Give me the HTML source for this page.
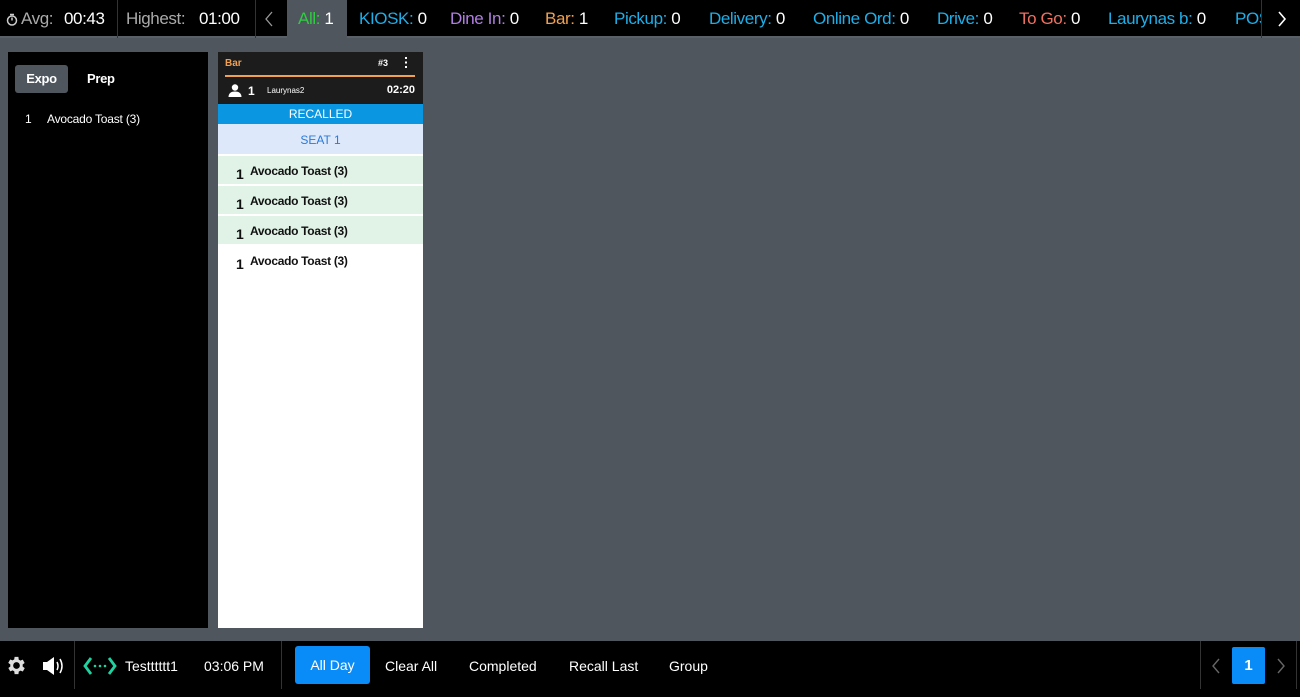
<!DOCTYPE html>
<html><head><style>
*{margin:0;padding:0;box-sizing:border-box}
body{width:1300px;height:697px;background:#4f565e;font-family:"Liberation Sans",sans-serif;position:relative;overflow:hidden}
.top{position:absolute;left:0;top:0;width:1300px;height:38px;background:#000;border-bottom:2px solid #5a6068}
.t{position:absolute;top:9px;font-size:17px;color:#fff;white-space:nowrap;letter-spacing:-0.4px}
.g{color:#aaa}
.vd{position:absolute;top:0;width:1px;height:38px;background:#333}
.left{position:absolute;left:8px;top:52px;width:200px;height:576px;background:#000}
.card{position:absolute;left:218px;top:52px;width:205px;height:576px;background:#fff}
.row{height:30px;border-bottom:2px solid #fff;font-size:12px;font-weight:bold;color:#111;position:relative;letter-spacing:-0.3px}
.row b{position:absolute;left:18px;top:10px;font-size:14px}
.row span{position:absolute;left:32px;top:8px}
.bot{position:absolute;left:0;top:641px;width:1300px;height:56px;background:#000}
.bt{position:absolute;top:17px;color:#fff;font-size:14px}
</style></head><body>
<div class="top">
<svg style="position:absolute;left:6px;top:13px" width="12" height="13" viewBox="0 0 12 13"><circle cx="6" cy="7.5" r="4.5" fill="none" stroke="#ccc" stroke-width="1.5"/><path d="M4 1.5h4M6 7.5V4.5" stroke="#ccc" stroke-width="1.5"/></svg>
<div class="t g" style="left:21px">Avg:</div><div class="t" style="left:64px">00:43</div>
<div class="vd" style="left:117px"></div>
<div class="t g" style="left:126px">Highest:</div><div class="t" style="left:199px">01:00</div>
<div class="vd" style="left:255px"></div>
<svg style="position:absolute;left:264px;top:11px" width="10" height="16" viewBox="0 0 10 16"><path d="M8 1L2 8l6 7" stroke="#999" stroke-width="1.3" fill="none"/></svg>
<div style="position:absolute;left:287px;top:0;width:60px;height:38px;background:#4f565e"></div>
<div class="t" style="left:298px"><span style="color:#2ecc40">All:</span> 1</div>
<div class="t" style="left:359px"><span style="color:#1eaee8">KIOSK:</span> 0</div>
<div class="t" style="left:450px"><span style="color:#b07ee0">Dine In:</span> 0</div>
<div class="t" style="left:545px"><span style="color:#f0a050">Bar:</span> 1</div>
<div class="t" style="left:614px"><span style="color:#1eaee8">Pickup:</span> 0</div>
<div class="t" style="left:709px"><span style="color:#1eaee8">Delivery:</span> 0</div>
<div class="t" style="left:813px"><span style="color:#1eaee8">Online Ord:</span> 0</div>
<div class="t" style="left:937px"><span style="color:#1eaee8">Drive:</span> 0</div>
<div class="t" style="left:1019px"><span style="color:#f07060">To Go:</span> 0</div>
<div class="t" style="left:1108px"><span style="color:#1eaee8">Laurynas b:</span> 0</div>
<div style="position:absolute;left:1235px;top:0;width:26px;height:38px;overflow:hidden"><div class="t" style="left:0;color:#1eaee8">POS</div></div>
<div class="vd" style="left:1261px"></div>
<svg style="position:absolute;left:1277px;top:11px" width="10" height="16" viewBox="0 0 10 16"><path d="M2 1l6 7-6 7" stroke="#fff" stroke-width="1.6" fill="none"/></svg>
</div>

<div class="left">
<div style="position:absolute;left:7px;top:13px;width:53px;height:28px;background:#4f565e;border-radius:3px;color:#fff;font-size:13px;font-weight:bold;text-align:center;line-height:28px;letter-spacing:-0.3px">Expo</div>
<div style="position:absolute;left:79px;top:19px;color:#fff;font-size:13px;font-weight:bold;letter-spacing:-0.3px">Prep</div>
<div style="position:absolute;left:17px;top:60px;color:#fff;font-size:12px">1</div>
<div style="position:absolute;left:39px;top:60px;color:#fff;font-size:12px;letter-spacing:-0.2px">Avocado Toast (3)</div>
</div>

<div class="card">
<div style="height:52px;background:#1c1c1c;position:relative;color:#fff">
<div style="position:absolute;left:7px;top:6px;font-size:10px;font-weight:bold;color:#f0a050">Bar</div>
<div style="position:absolute;left:160px;top:6px;font-size:9px;font-weight:bold">#3</div>
<div style="position:absolute;left:187px;top:5px;width:2px;height:11px;background:repeating-linear-gradient(#fff 0 2px,transparent 2px 4.5px)"></div>
<div style="position:absolute;left:7px;top:23px;width:190px;height:2px;background:#f0a050"></div>
<svg style="position:absolute;left:10px;top:32px" width="14" height="13" viewBox="0 0 14 13"><circle cx="7" cy="3.5" r="3.2" fill="#fff"/><path d="M0.5 13c0-4 3-5.5 6.5-5.5s6.5 1.5 6.5 5.5z" fill="#fff"/></svg>
<div style="position:absolute;left:30px;top:32px;font-size:12px;font-weight:bold">1</div>
<div style="position:absolute;left:49px;top:34px;font-size:8px">Laurynas2</div>
<div style="position:absolute;right:8px;top:32px;font-size:11px;font-weight:bold">02:20</div>
</div>
<div style="height:20px;background:#0a96e0;color:#fff;font-size:12px;text-align:center;line-height:20px">RECALLED</div>
<div style="height:32px;background:#dde8fb;color:#2a7ad8;font-size:12px;text-align:center;line-height:32px;border-bottom:2px solid #fff">SEAT 1</div>
<div class="row" style="background:#e0f3e6"><b>1</b><span>Avocado Toast (3)</span></div>
<div class="row" style="background:#e0f3e6"><b>1</b><span>Avocado Toast (3)</span></div>
<div class="row" style="background:#e0f3e6"><b>1</b><span>Avocado Toast (3)</span></div>
<div class="row"><b>1</b><span>Avocado Toast (3)</span></div>
</div>

<div class="bot">
<svg style="position:absolute;left:5px;top:13px" width="23" height="23" viewBox="0 0 24 24"><path fill="#ddd" d="M19.4 13a7.5 7.5 0 000-2l2.1-1.6-2-3.5-2.5 1a7 7 0 00-1.7-1L15 3h-4l-.4 2.7a7 7 0 00-1.7 1l-2.5-1-2 3.5L6.6 11a7.5 7.5 0 000 2l-2.1 1.6 2 3.5 2.5-1a7 7 0 001.7 1L11 21h4l.4-2.7a7 7 0 001.7-1l2.5 1 2-3.5zM13 15.5a3.5 3.5 0 110-7 3.5 3.5 0 010 7z" transform="translate(-1 0)"/></svg>
<svg style="position:absolute;left:41px;top:14px" width="26" height="22" viewBox="0 0 26 22"><path d="M2 7h4l7-5v18l-7-5H2z" fill="#fff"/><path d="M16 7q2 4 0 8M19 4q4 7 0 14" stroke="#fff" stroke-width="1.5" fill="none"/></svg>
<div style="position:absolute;left:74px;top:0;width:1px;height:48px;background:#333"></div>
<svg style="position:absolute;left:83px;top:14px" width="34" height="22" viewBox="0 0 34 22"><path d="M8 3L2 11l6 8M26 3l6 8-6 8" stroke="#1fd3a0" stroke-width="2.8" fill="none"/><circle cx="12" cy="11" r="1.3" fill="#1fd3a0"/><circle cx="17" cy="11" r="1.3" fill="#1fd3a0"/><circle cx="22" cy="11" r="1.3" fill="#1fd3a0"/></svg>
<div class="bt" style="left:125px">Testttttt1</div>
<div class="bt" style="left:204px">03:06 PM</div>
<div style="position:absolute;left:281px;top:0;width:1px;height:48px;background:#333"></div>
<div style="position:absolute;left:295px;top:5px;width:75px;height:38px;background:#0a8cf8;border-radius:3px;color:#fff;font-size:14px;text-align:center;line-height:38px">All Day</div>
<div class="bt" style="left:385px">Clear All</div>
<div class="bt" style="left:469px">Completed</div>
<div class="bt" style="left:569px">Recall Last</div>
<div class="bt" style="left:669px">Group</div>
<div style="position:absolute;left:1200px;top:0;width:1px;height:48px;background:#333"></div>
<svg style="position:absolute;left:1211px;top:17px" width="10" height="16" viewBox="0 0 10 16"><path d="M8 1L2 8l6 7" stroke="#666" stroke-width="1.4" fill="none"/></svg>
<div style="position:absolute;left:1232px;top:6px;width:33px;height:37px;background:#0a8cf8;border-radius:2px;color:#fff;font-size:15px;font-weight:bold;text-align:center;line-height:37px">1</div>
<svg style="position:absolute;left:1276px;top:17px" width="10" height="16" viewBox="0 0 10 16"><path d="M2 1l6 7-6 7" stroke="#666" stroke-width="1.4" fill="none"/></svg>
<div style="position:absolute;left:1296px;top:0;width:1px;height:48px;background:#333"></div>
</div>
</body></html>
